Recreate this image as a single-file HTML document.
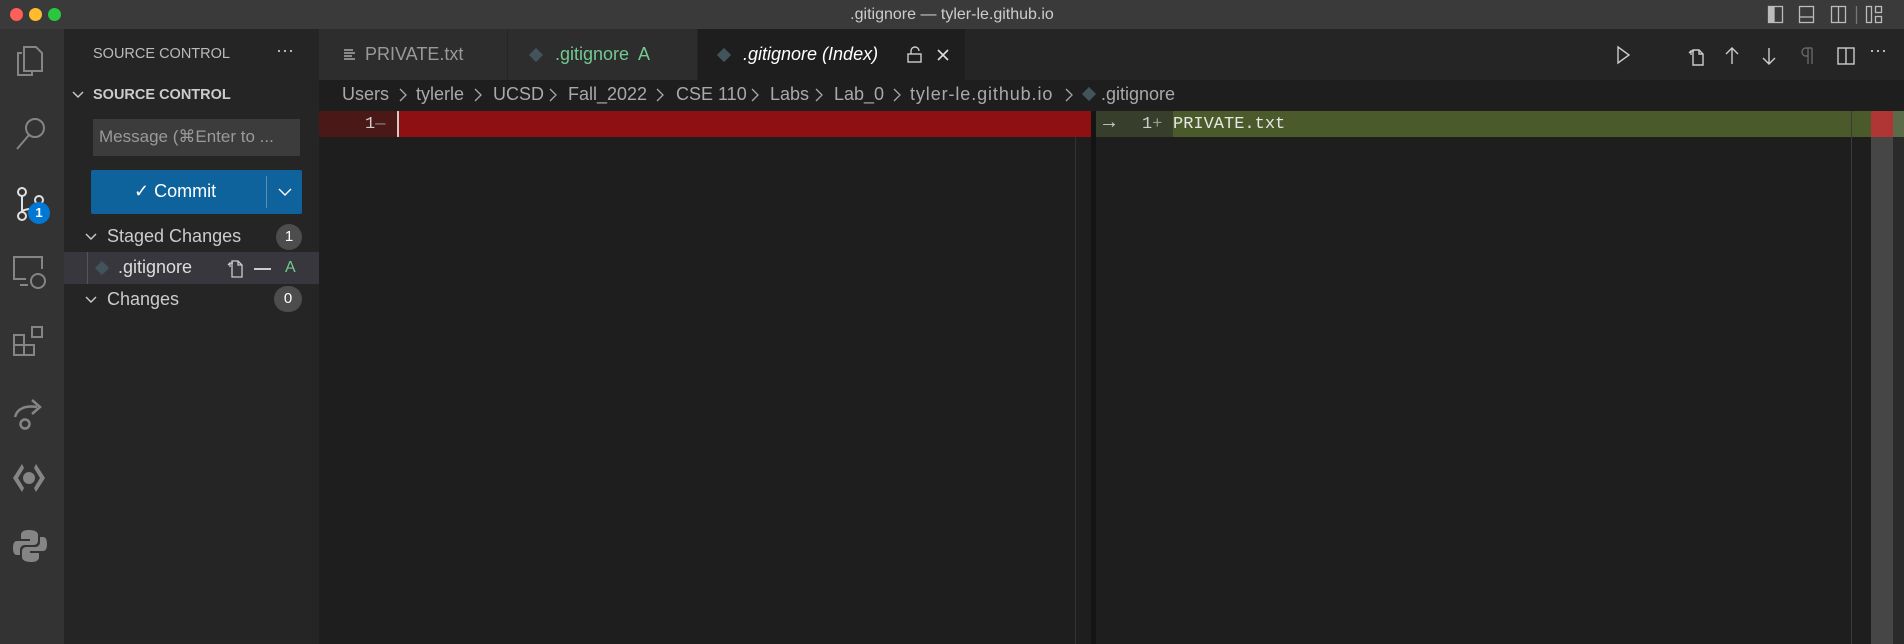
<!DOCTYPE html>
<html><head><meta charset="utf-8"><style>
*{margin:0;padding:0;box-sizing:border-box}
body{width:1904px;height:644px;background:#1e1e1e;font-family:"Liberation Sans",sans-serif;color:#ccc;position:relative;overflow:hidden}
.a{position:absolute}
.t{white-space:nowrap}
svg{position:absolute;overflow:visible}
.bc{position:absolute;top:84px;font-size:18px;color:#a9a9a9;white-space:nowrap}
</style></head><body>
<!-- title bar -->
<div class="a" style="left:0;top:0;width:1904px;height:29px;background:#3a3a3a"></div>
<div class="a" style="left:10px;top:8px;width:13px;height:13px;border-radius:50%;background:#fe5f57"></div>
<div class="a" style="left:29px;top:8px;width:13px;height:13px;border-radius:50%;background:#febc2e"></div>
<div class="a" style="left:48px;top:8px;width:13px;height:13px;border-radius:50%;background:#28c840"></div>
<div class="a t" style="left:0;width:1904px;top:6px;text-align:center;font-size:16px;color:#ccc">.gitignore — tyler-le.github.io</div>
<svg style="left:1768px;top:6px" width="136" height="18" fill="none" stroke="#bbb" stroke-width="1.3">
<rect x="0.5" y="0.5" width="14" height="16"/><rect x="1" y="1" width="5" height="15" fill="#bbb"/>
<rect x="31.5" y="0.5" width="14" height="16"/><line x1="31" y1="11" x2="46" y2="11"/>
<rect x="63.5" y="0.5" width="14" height="16"/><line x1="70.5" y1="1" x2="70.5" y2="17"/>
<line x1="88.5" y1="0" x2="88.5" y2="18" stroke="#777"/>
<rect x="98.5" y="0.5" width="5" height="16"/><rect x="107.5" y="0.5" width="6" height="6"/><rect x="107.5" y="10.5" width="6" height="6"/>
</svg>
<!-- activity bar -->
<div class="a" style="left:0;top:29px;width:64px;height:615px;background:#333"></div>
<svg style="left:14px;top:45px" width="36" height="36" fill="none" stroke="#858585" stroke-width="2"><path d="M8 8h-4v22h14v-4M10 2h12l6 6v18h-18z"/></svg>
<svg style="left:14px;top:115px" width="36" height="36" fill="none" stroke="#858585" stroke-width="2"><circle cx="21" cy="13" r="9"/><path d="M15 20L3 34"/></svg>
<svg style="left:14px;top:186px" width="36" height="36" fill="none" stroke="#e0e0e0" stroke-width="2"><circle cx="8" cy="6" r="4"/><circle cx="8" cy="30" r="4"/><circle cx="25" cy="14" r="4"/><path d="M8 10v16M25 18c0 6-17 4-17 8"/></svg>
<div class="a t" style="left:28px;top:202px;width:22px;height:22px;border-radius:50%;background:#0078d4;color:#fff;font-size:13px;font-weight:bold;text-align:center;line-height:22px">1</div>
<svg style="left:12px;top:255px" width="36" height="36" fill="none" stroke="#858585" stroke-width="2"><path d="M14 24H2V2h28v12M8 30h8"/><circle cx="26" cy="26" r="7"/></svg>
<svg style="left:12px;top:325px" width="36" height="36" fill="none" stroke="#858585" stroke-width="2"><rect x="2" y="10" width="10" height="10"/><rect x="2" y="20" width="10" height="10"/><rect x="12" y="20" width="10" height="10"/><rect x="20" y="2" width="10" height="10"/></svg>
<svg style="left:12px;top:395px" width="36" height="36" fill="none" stroke="#858585" stroke-width="2.5"><path d="M3 22c2-8 10-12 22-10M20 5l8 7-8 7"/><circle cx="13" cy="29" r="4.5"/></svg>
<svg style="left:12px;top:460px" width="36" height="36" fill="#858585"><path d="M10 4L1 18l9 14 2-4-6-10 6-10zM24 4l9 14-9 14-2-4 6-10-6-10z"/><circle cx="17" cy="18" r="6"/></svg>
<svg style="left:12px;top:528px" width="36" height="36" fill="#858585"><path d="M17 2c-7 0-8 3-8 5v4h9v2H5c-3 0-4 3-4 7s1 7 4 7h3v-5c0-3 2-5 5-5h9c2 0 4-2 4-4V7c0-3-3-5-9-5z"/><path d="M19 34c7 0 8-3 8-5v-4h-9v-2h13c3 0 4-3 4-7s-1-7-4-7h-3v5c0 3-2 5-5 5h-9c-2 0-4 2-4 4v6c0 3 3 5 9 5z"/></svg>
<!-- sidebar -->
<div class="a" style="left:64px;top:29px;width:255px;height:615px;background:#252526"></div>
<div class="a t" style="left:93px;top:46px;font-size:14.5px;color:#bbb">SOURCE CONTROL</div>
<div class="a t" style="left:276px;top:40px;font-size:18px;color:#ccc">···</div>
<svg style="left:72px;top:91px" width="12" height="8" fill="none" stroke="#ccc" stroke-width="1.4"><path d="M1 1l5 5 5-5"/></svg>
<div class="a t" style="left:93px;top:87px;font-size:14.5px;font-weight:bold;color:#ccc">SOURCE CONTROL</div>
<div class="a" style="left:93px;top:119px;width:207px;height:37px;background:#3c3c3c"></div>
<div class="a t" style="left:99px;top:127px;font-size:17px;color:#9a9a9a">Message (⌘Enter to ...</div>
<div class="a" style="left:91px;top:170px;width:211px;height:44px;background:#0e639c;border-radius:2px"></div>
<div class="a" style="left:266px;top:176px;width:1px;height:32px;background:#5a8fb8"></div>
<div class="a t" style="left:134px;top:181px;font-size:18px;color:#fff">✓ Commit</div>
<svg style="left:278px;top:188px" width="14" height="8" fill="none" stroke="#fff" stroke-width="1.4"><path d="M1 1l6 6 6-6"/></svg>
<svg style="left:85px;top:233px" width="12" height="8" fill="none" stroke="#ccc" stroke-width="1.4"><path d="M1 1l5 5 5-5"/></svg>
<div class="a t" style="left:107px;top:226px;font-size:18px;color:#ccc">Staged Changes</div>
<div class="a t" style="left:276px;top:224px;width:26px;height:26px;border-radius:13px;background:#4d4d4d;color:#fff;font-size:15px;text-align:center;line-height:26px">1</div>
<div class="a" style="left:64px;top:252px;width:255px;height:32px;background:#37373d"></div>
<div class="a" style="left:87px;top:252px;width:1px;height:32px;background:#555"></div>
<svg style="left:94px;top:260px" width="16" height="16"><rect x="3" y="3" width="10" height="10" transform="rotate(45 8 8)" fill="#41535b"/></svg>
<div class="a t" style="left:118px;top:257px;font-size:18px;color:#ddd">.gitignore</div>
<svg style="left:225px;top:258px" width="20" height="20" fill="none" stroke="#ccc" stroke-width="1.3"><path d="M7 3h6l4 4v12H7z M13 3v4h4 M5 9V5h3 M3 7l2-2"/></svg>
<div class="a" style="left:254px;top:268px;width:17px;height:1.5px;background:#ccc"></div>
<div class="a t" style="left:285px;top:259px;font-size:16px;color:#73c991">A</div>
<svg style="left:85px;top:296px" width="12" height="8" fill="none" stroke="#ccc" stroke-width="1.4"><path d="M1 1l5 5 5-5"/></svg>
<div class="a t" style="left:107px;top:289px;font-size:18px;color:#ccc">Changes</div>
<div class="a t" style="left:274px;top:286px;width:28px;height:26px;border-radius:13px;background:#4d4d4d;color:#fff;font-size:15px;text-align:center;line-height:26px">0</div>
<!-- tab bar -->
<div class="a" style="left:319px;top:29px;width:1585px;height:51px;background:#252526"></div>
<div class="a" style="left:319px;top:29px;width:188px;height:51px;background:#2d2d2d"></div>
<div class="a" style="left:508px;top:29px;width:189px;height:51px;background:#2d2d2d"></div>
<div class="a" style="left:698px;top:29px;width:267px;height:51px;background:#1e1e1e"></div>
<svg style="left:344px;top:49px" width="12" height="12" stroke="#aaa" stroke-width="1.4"><path d="M0 1h9M0 4h11M0 7h8M0 10h11"/></svg>
<div class="a t" style="left:365px;top:44px;font-size:18px;color:#999">PRIVATE.txt</div>
<svg style="left:528px;top:47px" width="16" height="16"><rect x="3" y="3" width="10" height="10" transform="rotate(45 8 8)" fill="#41535b"/></svg>
<div class="a t" style="left:555px;top:44px;font-size:18px;color:#73c991">.gitignore&nbsp; A</div>
<svg style="left:716px;top:47px" width="16" height="16"><rect x="3" y="3" width="10" height="10" transform="rotate(45 8 8)" fill="#41535b"/></svg>
<div class="a t" style="left:743px;top:44px;font-size:18px;font-style:italic;color:#fff">.gitignore (Index)</div>
<svg style="left:906px;top:46px" width="18" height="18" fill="none" stroke="#ccc" stroke-width="1.4"><rect x="2" y="8" width="13" height="8"/><path d="M5 8V5a4 4 0 0 1 8 0"/></svg>
<svg style="left:937px;top:49px" width="12" height="12" stroke="#ddd" stroke-width="1.6"><path d="M1 1l10 10M11 1L1 11"/></svg>
<svg style="left:1616px;top:46px" width="16" height="20" fill="none" stroke="#ccc" stroke-width="1.4"><path d="M2 1l11 8-11 8z"/></svg>
<svg style="left:1648px;top:46px" width="240" height="20" fill="none" stroke="#ccc" stroke-width="1.4">
<path d="M45 4h6l4 4v11h-10z M51 4v4h4 M43 9V5h3 M41 7l2-2"/>
<path d="M84 18V2M78 8l6-6 6 6"/>
<path d="M121 2v16M115 12l6 6 6-6"/>
<path d="M160 2v16M164 2v16M164 2h-6a4 4 0 0 0 0 8h2" stroke="#666"/>
<rect x="190" y="2" width="16" height="16"/><line x1="198" y1="2" x2="198" y2="18"/>
</svg>
<div class="a t" style="left:1869px;top:40px;font-size:18px;color:#ccc">···</div>
<!-- breadcrumbs -->
<div class="bc" style="left:342px">Users</div>
<div class="bc" style="left:416px">tylerle</div>
<div class="bc" style="left:493px">UCSD</div>
<div class="bc" style="left:568px">Fall_2022</div>
<div class="bc" style="left:676px">CSE 110</div>
<div class="bc" style="left:770px">Labs</div>
<div class="bc" style="left:834px">Lab_0</div>
<div class="bc" style="left:910px;letter-spacing:0.9px">tyler-le.github.io</div>
<svg style="left:0;top:88px" width="1100" height="14" fill="none" stroke="#a9a9a9" stroke-width="1.3">
<path d="M400 1l6 6-6 6M475 1l6 6-6 6M550 1l6 6-6 6M657 1l6 6-6 6M752 1l6 6-6 6M816 1l6 6-6 6M894 1l6 6-6 6M1066 1l6 6-6 6"/>
</svg>
<svg style="left:1081px;top:86px" width="16" height="16"><rect x="3" y="3" width="10" height="10" transform="rotate(45 8 8)" fill="#41535b"/></svg>
<div class="bc" style="left:1101px">.gitignore</div>
<!-- diff -->
<div class="a" style="left:319px;top:111px;width:78px;height:26px;background:#4b1818"></div>
<div class="a" style="left:397px;top:111px;width:698px;height:26px;background:#8e1012"></div>
<div class="a" style="left:397px;top:111px;width:2px;height:26px;background:#ccc"></div>
<div class="a t" style="left:365px;top:115px;font-family:'Liberation Mono',monospace;font-size:17px;color:#ccc">1<span style="color:#888">—</span></div>
<div class="a" style="left:1075px;top:137px;width:1px;height:507px;background:#333"></div>
<div class="a" style="left:1091px;top:111px;width:5px;height:533px;background:#141414"></div>
<div class="a" style="left:1096px;top:111px;width:77px;height:26px;background:#373e2c"></div>
<div class="a" style="left:1173px;top:111px;width:698px;height:26px;background:#4b5a2b"></div>
<div class="a t" style="left:1099px;top:111px;font-size:20px;color:#ccc">→</div>
<div class="a t" style="left:1142px;top:115px;font-family:'Liberation Mono',monospace;font-size:17px;color:#ccc">1<span style="color:#999">+</span></div>
<div class="a t" style="left:1173px;top:115px;font-family:'Liberation Mono',monospace;font-size:17px;color:#e6e6e6">PRIVATE.txt</div>
<div class="a" style="left:1851px;top:111px;width:1px;height:533px;background:#3a3a3a"></div>
<div class="a" style="left:1871px;top:137px;width:33px;height:507px;background:#2a2a2a"></div>
<div class="a" style="left:1871px;top:137px;width:22px;height:507px;background:#464646"></div>
<div class="a" style="left:1871px;top:111px;width:22px;height:26px;background:#b03535"></div>
<div class="a" style="left:1893px;top:111px;width:11px;height:26px;background:#5c6b47"></div>
</body></html>
